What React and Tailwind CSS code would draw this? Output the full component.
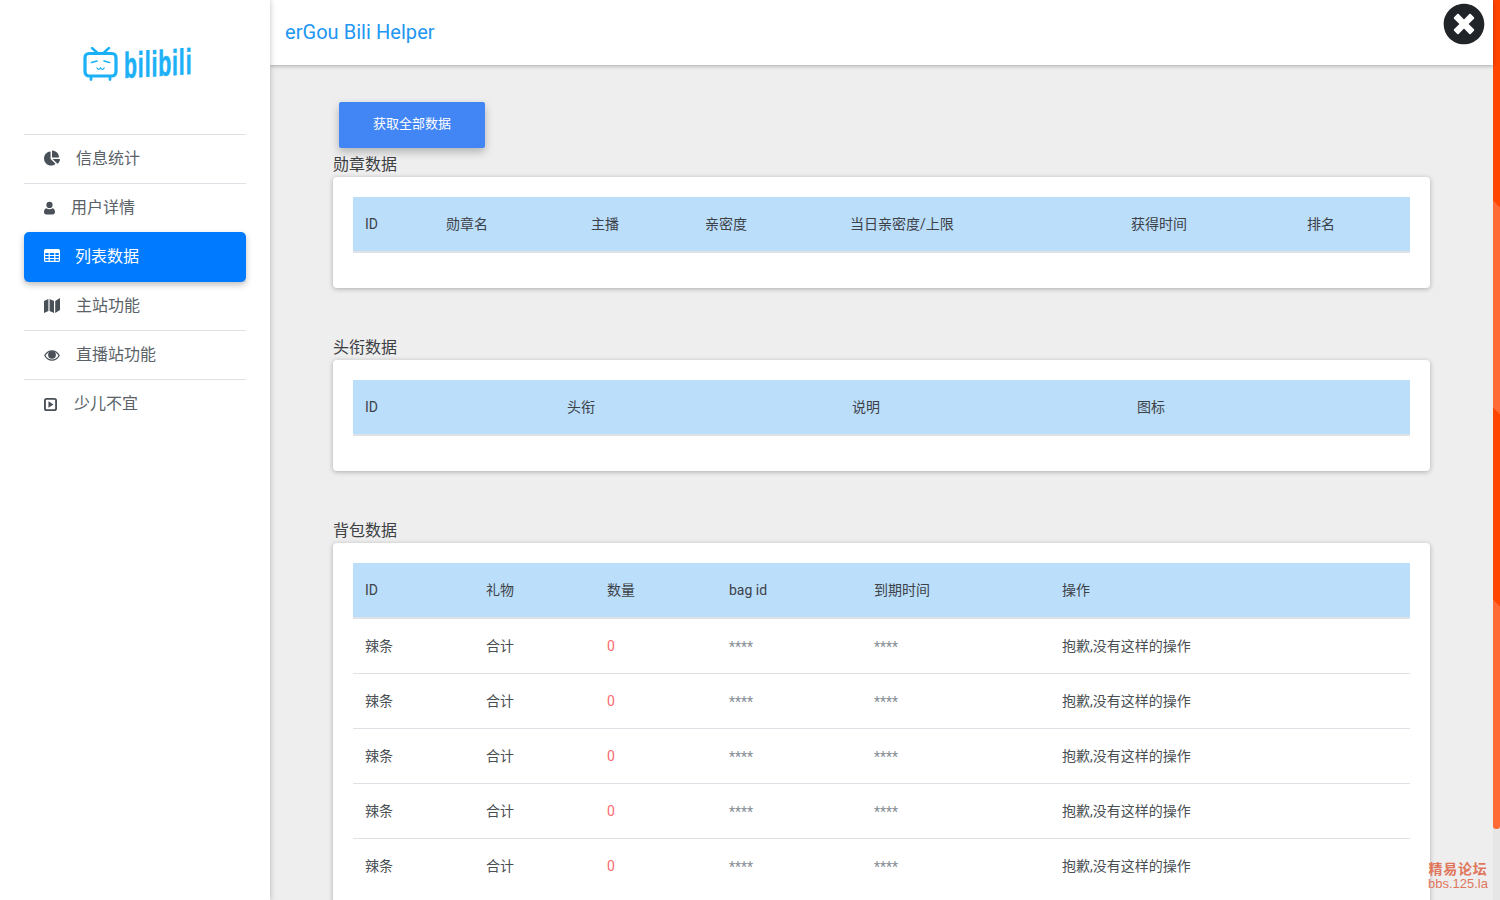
import { FaChartPie, FaTimesCircle } from 'react-icons/fa';

function UserIcon({ className }) {
  return (
    <svg viewBox="0 0 12 14" fill="currentColor" className={className}>
      <circle cx="6" cy="3.6" r="3.4" />
      <path d="M2.4 7.2 C3.4 8 4.6 8.4 6 8.4 C7.4 8.4 8.6 8 9.6 7.2 C11 7.6 12 9.2 12 11.4 C12 13 11 14 9.6 14 H2.4 C1 14 0 13 0 11.4 C0 9.2 1 7.6 2.4 7.2 Z" />
    </svg>
  );
}

function TableIcon({ className }) {
  return (
    <svg viewBox="0 0 16 13" className={className}>
      <path
        fill="currentColor"
        fillRule="evenodd"
        d="M1.5 0 H14.5 A1.5 1.5 0 0 1 16 1.5 V11.5 A1.5 1.5 0 0 1 14.5 13 H1.5 A1.5 1.5 0 0 1 0 11.5 V1.5 A1.5 1.5 0 0 1 1.5 0 Z
           M1.2 4 V6 H4.6 V4 Z M5.8 4 V6 H10.2 V4 Z M11.4 4 V6 H14.8 V4 Z
           M1.2 7 V9 H4.6 V7 Z M5.8 7 V9 H10.2 V7 Z M11.4 7 V9 H14.8 V7 Z
           M1.2 10 V11.8 H4.6 V10 Z M5.8 10 V11.8 H10.2 V10 Z M11.4 10 V11.8 H14.8 V10 Z"
      />
    </svg>
  );
}

function MapIcon({ className }) {
  return (
    <svg viewBox="0 0 16 15" fill="currentColor" className={className}>
      <path d="M0 3 L4.4 1 V13 L0 15 Z" />
      <path d="M5.6 1 L10 3 V15 L5.6 13 Z" />
      <path d="M11.2 3 L16 0 V12 L11.2 15 Z" />
    </svg>
  );
}

function EyeIcon({ className }) {
  return (
    <svg viewBox="0 0 16 11" className={className}>
      <path d="M0.8 5.5 C2.6 2.4 5 0.8 8 0.8 C11 0.8 13.4 2.4 15.2 5.5 C13.4 8.6 11 10.2 8 10.2 C5 10.2 2.6 8.6 0.8 5.5 Z" fill="none" stroke="currentColor" strokeWidth="1.3" />
      <circle cx="8" cy="4.8" r="3.9" fill="currentColor" />
    </svg>
  );
}

function PlaySquareIcon({ className }) {
  return (
    <svg viewBox="0 0 14 14" className={className}>
      <rect x="1" y="1" width="12" height="12" rx="1.8" fill="none" stroke="currentColor" strokeWidth="2" />
      <path d="M4.8 3.6 L10.2 7 L4.8 10.4 Z" fill="currentColor" />
    </svg>
  );
}

const navItems = [
  { label: '信息统计', icon: FaChartPie, iconClass: 'w-4 h-4 mr-4 -mt-[2px]' },
  { label: '用户详情', icon: UserIcon, iconClass: 'w-[11px] h-[14px] mr-4' },
  { label: '列表数据', icon: TableIcon, iconClass: 'w-4 h-[13px] mr-[15px] -mt-[3px]', active: true },
  { label: '主站功能', icon: MapIcon, iconClass: 'w-4 h-[15px] mr-4 -mt-px' },
  { label: '直播站功能', icon: EyeIcon, iconClass: 'w-4 h-[11px] mr-4' },
  { label: '少儿不宜', icon: PlaySquareIcon, iconClass: 'w-[13px] h-[13px] mr-[17px]' },
];

const medalCols = ['w-[81px]', 'w-[145px]', 'w-[114px]', 'w-[145px]', 'w-[281px]', 'w-[176px]', 'w-[115px]'];
const titleCols = ['w-[202px]', 'w-[285px]', 'w-[285px]', 'w-[285px]'];
const bagCols = ['w-[121px]', 'w-[121px]', 'w-[122px]', 'w-[145px]', 'w-[188px]', 'w-[360px]'];

const bagRows = [1, 2, 3, 4, 5];

function BiliLogo() {
  return (
    <div className="flex items-start justify-center h-[134px] pt-[47px] pl-[2px] text-[#1cb0f6]">
      <svg width="36" height="34" viewBox="0 0 36 34" fill="none" stroke="currentColor" className="mr-[5px]">
        <rect x="2" y="6.5" width="31" height="22.5" rx="4" strokeWidth="3.2" />
        <path d="M9 1 L14 5.5 M26 1 L21 5.5" strokeWidth="2.4" strokeLinecap="round" />
        <path d="M8 31 v1.5 M27 31 v1.5" strokeWidth="2.8" strokeLinecap="round" />
        <path d="M8.5 15.5 L14 14 M21 14 L26.5 15.5" strokeWidth="1.7" strokeLinecap="round" />
        <path d="M14 21 q1.8 2.6 3.6 0 q1.8 2.6 3.6 0" strokeWidth="1.3" strokeLinecap="round" />
      </svg>
      <div className="w-[65px] h-[32px] mt-[1px]">
        <span className="block origin-top-left font-['Liberation_Sans',sans-serif] font-bold text-[36px] leading-[36px] tracking-[1.5px] scale-x-[0.59] -skew-y-2 [-webkit-text-stroke:0.7px_currentColor]">bilibili</span>
      </div>
    </div>
  );
}

function Sidebar() {
  return (
    <aside className="w-[270px] h-full shrink-0 bg-white shadow-[0_0_6px_rgba(0,0,0,0.25)] relative z-20">
      <BiliLogo />
      <nav className="mx-6">
        {navItems.map((item) => {
          const Icon = item.icon;
          return item.active ? (
            <a key={item.label} className="flex items-center h-[50px] -mb-px px-5 rounded-[5px] bg-[#007bff] text-white text-base shadow-[0_3px_6px_rgba(0,0,0,0.25)] relative">
              <Icon className={item.iconClass} />
              {item.label}
            </a>
          ) : (
            <a key={item.label} className="flex items-center h-[49px] px-5 border-t border-[#dee2e6] text-[#5a6268] text-base">
              <Icon className={item.iconClass + ' text-[#495057]'} />
              {item.label}
            </a>
          );
        })}
      </nav>
    </aside>
  );
}

function HeadRow({ cols, labels }) {
  return (
    <>
      <colgroup>
        {cols.map((c, i) => <col key={i} className={c} />)}
      </colgroup>
      <thead>
        <tr className="bg-[#bbdefb] border-b-2 border-[#dee2e6]">
          {labels.map((l) => (
            <th key={l} className="h-[55px] px-3 text-left font-normal text-sm text-[#3d4248]">{l}</th>
          ))}
        </tr>
      </thead>
    </>
  );
}

function Section({ title, children }) {
  return (
    <section className="mb-12">
      <h2 className="text-base leading-6 font-normal text-[#3c4043]">{title}</h2>
      <div className="bg-white rounded-[4px] p-5 shadow-[0_1px_5px_rgba(0,0,0,0.28)]">
        <table className="table-fixed w-[1057px] mb-[15px] border-collapse">{children}</table>
      </div>
    </section>
  );
}

export default function App() {
  return (
    <div className="h-screen w-[1500px] flex overflow-hidden bg-[#eeeeee] font-['Roboto','Noto_Sans_CJK_SC',sans-serif] relative">
      <Sidebar />
      <div className="w-[1223px] h-full shrink-0 flex flex-col">
        <header className="h-[65px] shrink-0 bg-white flex items-center px-[15px] pb-[2px] text-xl tracking-[0.05px] text-[#2196f3] shadow-[0_1px_4px_rgba(0,0,0,0.3)] relative z-10">
          erGou Bili Helper
        </header>
        <main className="flex-1 overflow-hidden pt-[37px] pl-[63px] pr-[63px]">
          <button className="block w-[146px] h-[46px] mx-[6px] mb-[5px] pb-[2px] rounded-[2px] bg-[#4285f4] text-white text-[13px] shadow-[0_4px_8px_rgba(0,0,0,0.25)]">
            获取全部数据
          </button>
          <Section title="勋章数据">
            <HeadRow cols={medalCols} labels={['ID', '勋章名', '主播', '亲密度', '当日亲密度/上限', '获得时间', '排名']} />
          </Section>
          <Section title="头衔数据">
            <HeadRow cols={titleCols} labels={['ID', '头衔', '说明', '图标']} />
          </Section>
          <Section title="背包数据">
            <HeadRow cols={bagCols} labels={['ID', '礼物', '数量', 'bag id', '到期时间', '操作']} />
            <tbody>
              {bagRows.map((r) => (
                <tr key={r} className="border-t border-[#dee2e6] first:border-t-0 text-sm text-[#4a4f54]">
                  <td className="h-[55px] px-3">辣条</td>
                  <td className="px-3">合计</td>
                  <td className="px-3 text-[#fa6a6f]">0</td>
                  <td className="px-3 pt-[2px] text-[#868e96]">****</td>
                  <td className="px-3 pt-[2px] text-[#868e96]">****</td>
                  <td className="px-3">抱歉,没有这样的操作</td>
                </tr>
              ))}
            </tbody>
          </Section>
        </main>
      </div>
      <div className="w-[7px] h-full shrink-0 bg-[#e6e6e6]">
        <div className="h-[829px] rounded-b-[3px] bg-[linear-gradient(225deg,#ff4500_0,#ff4500_24.8%,#ff6a35_24.8%,#ff6a35_49.6%,#ff4500_49.6%,#ff4500_72.6%,#ff6a35_72.6%,#ff6a35_100%)]" />
      </div>
      <FaTimesCircle className="absolute left-[1443px] top-[3px] w-[42px] h-[42px] text-[#212529] z-30 bg-white rounded-full" />
      <div className="absolute left-[1427px] top-[861px] w-[62px] text-center font-bold text-[#e0765c] z-30">
        <div className="text-[14px] leading-[16px] tracking-[0.8px]">精易论坛</div>
        <div className="font-['Liberation_Sans',sans-serif] text-[13px] leading-[13px] font-normal">bbs.125.la</div>
      </div>
    </div>
  );
}
